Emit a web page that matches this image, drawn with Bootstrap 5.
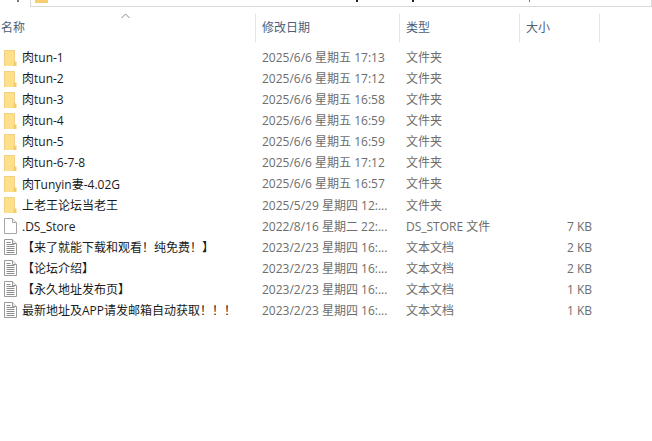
<!DOCTYPE html>
<html lang="zh-CN">
<head>
  <meta charset="UTF-8">
  <title>文件列表</title>
  <link href="https://cdn.jsdelivr.net/npm/bootstrap@5.3.0/dist/css/bootstrap.min.css" rel="stylesheet">
  <style>
    body { font-family: "Open Sans", "Noto Sans CJK SC", sans-serif; font-size: 12px; line-height: 21px; color: #1a1a1a; background: #fff; overflow: hidden; }
    .addr-wrap { height: 7px; padding-left: 30px; position: relative; }
    .addr-box { height: 7px; border: 1px solid #d9d9d9; border-top: 0; overflow: hidden; padding-left: 4px; }
    .tick { position: absolute; top: 0; width: 2px; height: 2px; background: #222; }
    .tick-a { left: 356px; }
    .tick-b { left: 412px; }
    .tick-c { left: 529px; width: 1px; background: #777; }
    .tick-d { left: 17px; background: #777; }
    .hdr { height: 28px; margin-top: 7px; color: #4c607a; position: relative; }
    .hdr > div { height: 28px; line-height: 27px; border-right: 1px solid #e5e5e5; }
    .sort-arrow { position: absolute; left: 121px; top: -1px; }
    .file-list { margin-top: 5px; }
    .file-row { height: 21.08px; }
    .col-name { width: 256px; padding-left: 3px; gap: 5px; white-space: nowrap; }
    .col-date { width: 144px; padding-left: 6px; color: #6d6d6d; white-space: nowrap; }
    .col-type { width: 120px; padding-left: 6px; color: #6d6d6d; white-space: nowrap; }
    .col-size { width: 80px; padding-right: 8px; color: #6d6d6d; text-align: right; white-space: nowrap; }
    .hdr .col-name { padding-left: 1px; }
    .hdr .col-date, .hdr .col-type, .hdr .col-size { color: #4c607a; text-align: left; }
    .hdr .col-size { padding: 0 0 0 6px; }
  </style>
</head>
<body>
  <svg width="0" height="0" class="d-block">
    <defs>
      <symbol id="ico-folder" viewBox="0 0 14 16">
        <path d="M1 0h10.500l.5 1v11h1v4H1z" fill="#ffe08a"/>
        <path d="M1.500 16V.5h10v11" fill="none" stroke="#efd084"/>
        <path d="M10.500 11.500h3V16h-3z" fill="#f2cd6c"/>
      </symbol>
      <symbol id="ico-blank" viewBox="0 0 14 16">
        <path d="M1.500.5h8l4 4v11h-12z" fill="#fff" stroke="#a6a6a6"/>
        <path d="M9.500.5v4h4" fill="#f0f0f0" stroke="#a6a6a6"/>
      </symbol>
      <symbol id="ico-text" viewBox="0 0 14 16">
        <path d="M1.500.5h8l4 4v11h-12z" fill="#fff" stroke="#9a9a9a"/>
        <path d="M9.500.5v4h4" fill="#eee" stroke="#9a9a9a"/>
        <path d="M3.500 3.500h4M3.500 5.500h8M3.500 7.500h8M3.500 9.500h8M3.500 11.500h8M3.500 13.500h8" stroke="#8c8c8c"/>
      </symbol>
    </defs>
  </svg>

  <div class="addr-wrap">
    <span class="tick tick-a"></span>
    <span class="tick tick-b"></span>
    <span class="tick tick-c"></span>
    <span class="tick tick-d"></span>
    <div class="addr-box">
      <svg width="14" height="3" class="d-block"><rect width="13" height="3" fill="#f5cf6d"/></svg>
    </div>
  </div>

  <div class="hdr d-flex">
    <svg class="sort-arrow" width="9" height="6" viewBox="0 0 9 6"><path d="M.5 5 4.500 1l4 4" fill="none" stroke="#8a8a8a"/></svg>
    <div class="col-name">名称</div>
    <div class="col-date">修改日期</div>
    <div class="col-type">类型</div>
    <div class="col-size">大小</div>
  </div>

  <div class="file-list" id="files"></div>

  <script>
    const files = [
      ["folder", "肉tun-1", "2025/6/6 星期五 17:13", "文件夹", ""],
      ["folder", "肉tun-2", "2025/6/6 星期五 17:12", "文件夹", ""],
      ["folder", "肉tun-3", "2025/6/6 星期五 16:58", "文件夹", ""],
      ["folder", "肉tun-4", "2025/6/6 星期五 16:59", "文件夹", ""],
      ["folder", "肉tun-5", "2025/6/6 星期五 16:59", "文件夹", ""],
      ["folder", "肉tun-6-7-8", "2025/6/6 星期五 17:12", "文件夹", ""],
      ["folder", "肉Tunyin妻-4.02G", "2025/6/6 星期五 16:57", "文件夹", ""],
      ["folder", "上老王论坛当老王", "2025/5/29 星期四 12:...", "文件夹", ""],
      ["blank", ".DS_Store", "2022/8/16 星期二 22:...", "DS_STORE 文件", "7 KB"],
      ["text", "【来了就能下载和观看！纯免费！】", "2023/2/23 星期四 16:...", "文本文档", "2 KB"],
      ["text", "【论坛介绍】", "2023/2/23 星期四 16:...", "文本文档", "2 KB"],
      ["text", "【永久地址发布页】", "2023/2/23 星期四 16:...", "文本文档", "1 KB"],
      ["text", "最新地址及APP请发邮箱自动获取！！！", "2023/2/23 星期四 16:...", "文本文档", "1 KB"]
    ];

    // One flex row per file
    document.getElementById("files").innerHTML = files.map(f => `
      <div class="file-row d-flex">
        <div class="col-name d-flex align-items-center">
          <svg width="14" height="16" class="flex-shrink-0"><use href="#ico-${f[0]}"/></svg>
          <span>${f[1]}</span>
        </div>
        <div class="col-date">${f[2]}</div>
        <div class="col-type">${f[3]}</div>
        <div class="col-size">${f[4]}</div>
      </div>`).join("");
  </script>
  <script src="https://cdn.jsdelivr.net/npm/bootstrap@5.3.0/dist/js/bootstrap.bundle.min.js"></script>
</body>
</html>
